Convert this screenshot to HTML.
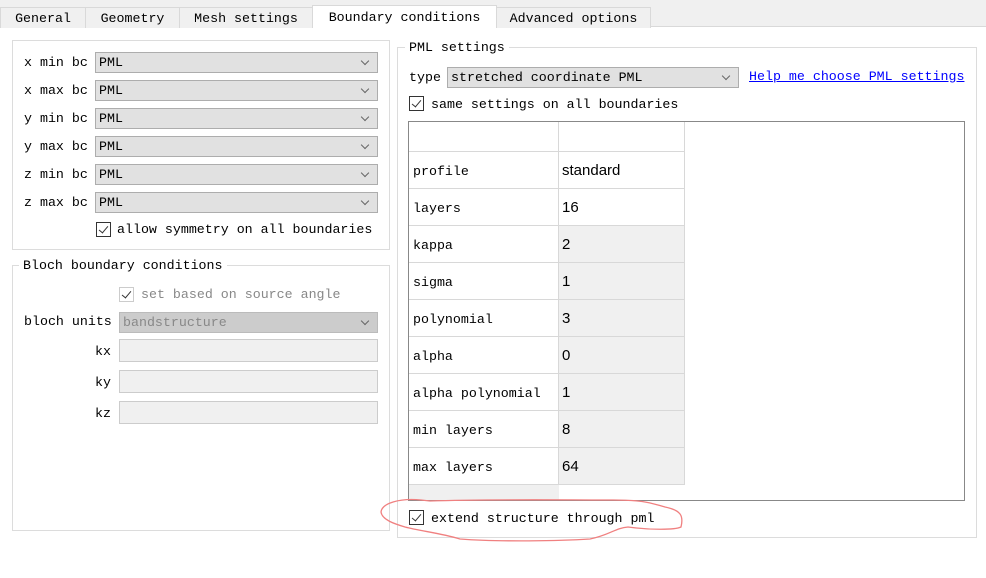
<!DOCTYPE html>
<html><head><style>
*{margin:0;padding:0;box-sizing:border-box}
body{width:986px;height:578px;background:#fff;position:relative;overflow:hidden;font-family:"Liberation Mono",monospace;font-size:13.3px;color:#000}
.a{position:absolute;white-space:nowrap}
.tabbar{position:absolute;left:0;top:0;width:986px;height:27px;background:#f0f0f0;border-bottom:1px solid #d9d9d9}
.tab{position:absolute;top:7px;height:21px;border:1px solid #d9d9d9;border-bottom:none;background:#f0f0f0;text-align:center;line-height:21px}
.grp{position:absolute;border:1px solid #dcdcdc}
.gt{position:absolute;background:#fff;padding:0 4px;line-height:16px}
.cb{position:absolute;height:21px;background:#e1e1e1;border:1px solid #adadad;line-height:20px;padding-left:3px}
.cb:after{content:"";position:absolute;right:9px;top:5px;width:5px;height:5px;border-right:1px solid #666;border-bottom:1px solid #666;transform:rotate(45deg)}
.lbl{position:absolute;line-height:22px}
.chk{position:absolute;width:15px;height:15px;border:1px solid #333;background:#fff}
.chk:after{content:"";position:absolute;left:4px;top:1px;width:4px;height:8px;border-right:1.3px solid #333;border-bottom:1.3px solid #333;transform:rotate(40deg)}
.inp{position:absolute;left:119px;width:259px;height:23px;background:#f0f0f0;border:1px solid #ccc}
.tbl{position:absolute;left:408px;top:121px;width:557px;height:380px;border:1px solid #888;background:#fff;overflow:hidden}
.r{position:absolute;left:0;width:276px;height:37px;border-bottom:1px solid #d8d8d8}
.c1{position:absolute;left:0;top:0;width:150px;height:36px;border-right:1px solid #d8d8d8;line-height:40px;padding-left:4px}
.c2{position:absolute;left:150px;top:0;width:126px;height:36px;border-right:1px solid #d8d8d8;line-height:38px;padding-left:3px;font-family:"Liberation Sans",sans-serif;font-size:15px}
.g{background:#f0f0f0}
</style></head><body>
<div class="tabbar"></div>
<div class="tab" style="left:0;width:86px">General</div>
<div class="tab" style="left:85px;width:95px">Geometry</div>
<div class="tab" style="left:179px;width:134px">Mesh settings</div>
<div class="tab" style="left:312px;width:185px;top:5px;height:23px;background:#fff;line-height:23px">Boundary conditions</div>
<div class="tab" style="left:496px;width:155px">Advanced options</div>

<div class="grp" style="left:12px;top:40px;width:378px;height:210px"></div>
<div class="lbl" style="left:24px;top:52px">x min bc</div><div class="cb" style="left:95px;top:52px;width:283px">PML</div>
<div class="lbl" style="left:24px;top:80px">x max bc</div><div class="cb" style="left:95px;top:80px;width:283px">PML</div>
<div class="lbl" style="left:24px;top:108px">y min bc</div><div class="cb" style="left:95px;top:108px;width:283px">PML</div>
<div class="lbl" style="left:24px;top:136px">y max bc</div><div class="cb" style="left:95px;top:136px;width:283px">PML</div>
<div class="lbl" style="left:24px;top:164px">z min bc</div><div class="cb" style="left:95px;top:164px;width:283px">PML</div>
<div class="lbl" style="left:24px;top:192px">z max bc</div><div class="cb" style="left:95px;top:192px;width:283px">PML</div>
<div class="chk" style="left:96px;top:222px"></div><div class="lbl" style="left:117px;top:219px">allow symmetry on all boundaries</div>

<div class="grp" style="left:12px;top:265px;width:378px;height:266px"></div>
<div class="gt" style="left:19px;top:258px">Bloch boundary conditions</div>
<div class="chk" style="left:119px;top:287px;border-color:#ccc"></div>
<div class="lbl" style="left:141px;top:284px;color:#888">set based on source angle</div>
<div class="lbl" style="left:24px;top:311px">bloch units</div>
<div class="cb" style="left:119px;top:312px;width:259px;background:#ccc;border-color:#bbb;color:#888">bandstructure</div>
<div class="lbl" style="left:95px;top:341px">kx</div><div class="inp" style="top:339px"></div>
<div class="lbl" style="left:95px;top:372px">ky</div><div class="inp" style="top:370px"></div>
<div class="lbl" style="left:95px;top:403px">kz</div><div class="inp" style="top:401px"></div>

<div class="grp" style="left:397px;top:47px;width:580px;height:491px"></div>
<div class="gt" style="left:405px;top:40px">PML settings</div>
<div class="lbl" style="left:409px;top:67px">type</div>
<div class="cb" style="left:447px;top:67px;width:292px">stretched coordinate PML</div>
<div class="lbl" style="left:749px;top:66px;color:#00f;text-decoration:underline">Help me choose PML settings</div>
<div class="chk" style="left:409px;top:96px"></div><div class="lbl" style="left:431px;top:94px">same settings on all boundaries</div>

<div class="tbl">
<div class="r" style="top:0;height:30px"><div class="c1" style="height:29px"></div><div class="c2" style="height:29px"></div></div>
<div class="r" style="top:30px"><div class="c1">profile</div><div class="c2">standard</div></div>
<div class="r" style="top:67px"><div class="c1">layers</div><div class="c2">16</div></div>
<div class="r" style="top:104px"><div class="c1">kappa</div><div class="c2 g">2</div></div>
<div class="r" style="top:141px"><div class="c1">sigma</div><div class="c2 g">1</div></div>
<div class="r" style="top:178px"><div class="c1">polynomial</div><div class="c2 g">3</div></div>
<div class="r" style="top:215px"><div class="c1">alpha</div><div class="c2 g">0</div></div>
<div class="r" style="top:252px"><div class="c1">alpha polynomial</div><div class="c2 g">1</div></div>
<div class="r" style="top:289px"><div class="c1">min layers</div><div class="c2 g">8</div></div>
<div class="r" style="top:326px"><div class="c1">max layers</div><div class="c2 g">64</div></div>
<div style="position:absolute;left:0;top:363px;width:150px;height:20px;background:#f0f0f0"></div>
</div>

<div class="chk" style="left:409px;top:510px"></div><div class="lbl" style="left:431px;top:508px">extend structure through pml</div>
<svg class="a" style="left:0;top:0" width="986" height="578"><path d="M421 500 C400 498 382 503 381 512 C382 520 395 524 405 527 C420 531 440 533 460 539 C500 542 560 541 590 539 C610 535 615 528 628 527 C650 530 675 530 681 527 C684 515 680 510 665 507 C650 503 645 500 613 500 C560 500 490 499 430 501 Z" fill="none" stroke="#f08080" stroke-width="1.3"/></svg>
</body></html>
